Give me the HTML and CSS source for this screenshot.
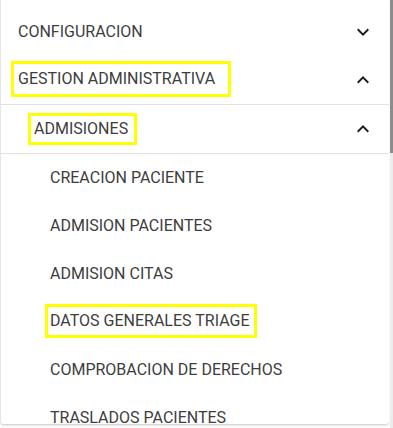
FILE: index.html
```html
<!DOCTYPE html>
<html lang="es">
<head>
<meta charset="utf-8">
<title>Menu</title>
<link rel="stylesheet" href="styles.css">
</head>
<body>
<div class="frame">
  <nav class="panel">
    <div class="row top">
      <span class="label">CONFIGURACION</span>
      <svg class="chev" viewBox="0 0 24 24"><path d="M16.59 8.59L12 13.17 7.41 8.59 6 10l6 6 6-6z"/></svg>
    </div>
    <div class="row top">
      <span class="label hl hl-gestion">GESTION ADMINISTRATIVA</span>
      <svg class="chev" viewBox="0 0 24 24"><path d="M12 8l-6 6 1.41 1.41L12 10.83l4.59 4.58L18 14z"/></svg>
    </div>
    <div class="divider"></div>
    <div class="row sub">
      <span class="label hl hl-admisiones">ADMISIONES</span>
      <svg class="chev" viewBox="0 0 24 24"><path d="M12 8l-6 6 1.41 1.41L12 10.83l4.59 4.58L18 14z"/></svg>
    </div>
    <div class="divider"></div>
    <div class="row item"><span class="label">CREACION PACIENTE</span></div>
    <div class="row item"><span class="label">ADMISION PACIENTES</span></div>
    <div class="row item"><span class="label">ADMISION CITAS</span></div>
    <div class="row item"><span class="label hl hl-datos">DATOS GENERALES TRIAGE</span></div>
    <div class="row item"><span class="label">COMPROBACION DE DERECHOS</span></div>
    <div class="row item"><span class="label">TRASLADOS PACIENTES</span></div>
  </nav>
  <div class="scrollbar"><div class="thumb"></div></div>
</div>
</body>
</html>
```
FILE: styles.css
```css
html, body {
  margin: 0;
  padding: 0;
  background: #ffffff;
}
body {
  font-family: Roboto, "Liberation Sans", Arial, sans-serif;
  width: 393px;
  height: 428px;
  overflow: hidden;
}
.frame {
  display: flex;
  width: 393px;
  height: 428px;
}
.panel {
  width: 389px;
  height: 425px;
  box-sizing: border-box;
  border-left: 1px solid #e4e4e4;
  border-bottom: 1px solid #d8d8d8;
  border-radius: 0 0 4px 4px;
  box-shadow: 0 1px 2px rgba(0,0,0,0.10);
  padding-top: 8px;
  overflow: hidden;
  display: flex;
  flex-direction: column;
  background: #fff;
}
.row {
  height: 48px;
  flex: 0 0 48px;
  display: flex;
  align-items: center;
  justify-content: space-between;
  padding-right: 14px;
  box-sizing: border-box;
}
.row.top { padding-left: 17px; }
.row.sub { padding-left: 33px; }
.row.item { padding-left: 49px; }
.label {
  font-size: 16px;
  color: #3d3d3d;
  line-height: 20px;
  white-space: nowrap;
}
.chev {
  width: 24px;
  height: 24px;
  fill: #1f1f1f;
  flex: 0 0 24px;
}
.divider {
  height: 1px;
  flex: 0 0 1px;
  background: #e2e2e2;
}
.hl {
  border: 3px solid #ffff00;
  box-sizing: border-box;
}
.hl-gestion {
  margin-left: -7px;
  padding: 5px 13px 5px 4px;
  margin-top: -2px;
}
.hl-admisiones {
  margin-left: -6px;
  padding: 3px 6px 3px 3px;
  margin-top: -1px;
}
.hl-datos {
  margin-left: -5px;
  padding: 4px 5px 4px 2px;
  margin-top: -2px;
}
.scrollbar {
  width: 3px;
  margin-left: 1px;
  height: 428px;
  background: #ececec;
}
.thumb {
  height: 153px;
  background: #8c8c8c;
}
```
